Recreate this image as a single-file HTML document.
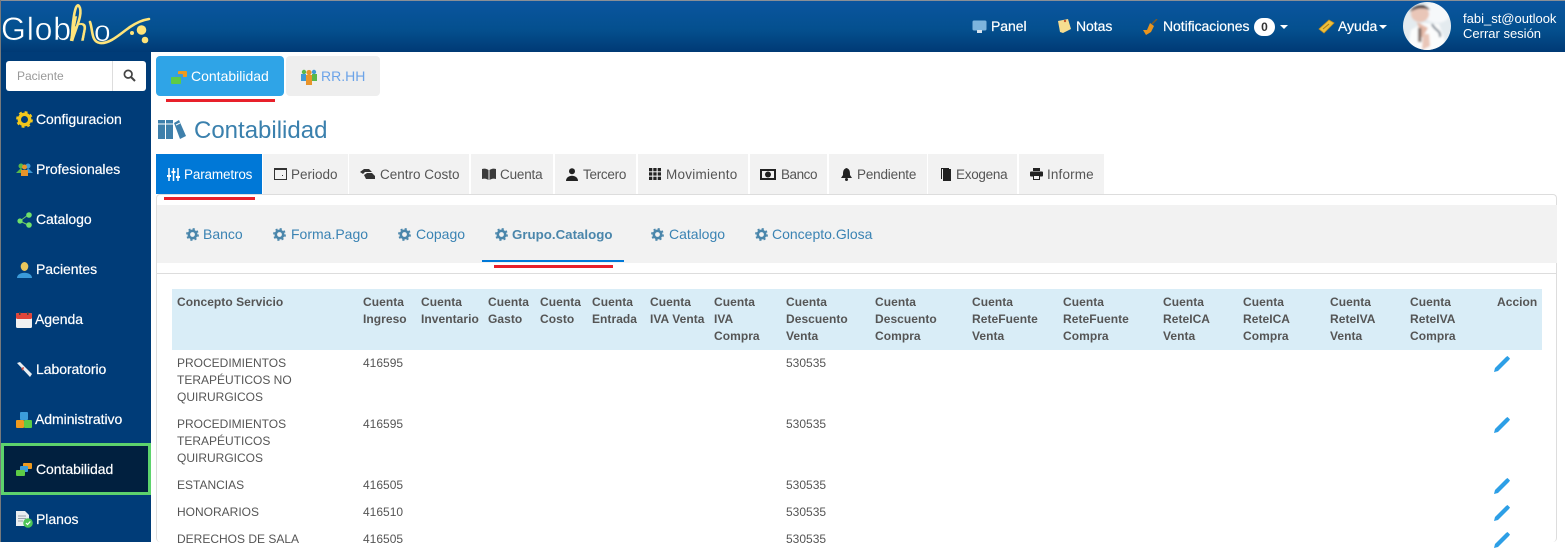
<!DOCTYPE html>
<html lang="es">
<head>
<meta charset="utf-8">
<title>Contabilidad</title>
<style>
html,body{margin:0;padding:0;background:#fff}
body{width:1565px;height:542px;overflow:hidden;position:relative;font-family:"Liberation Sans",sans-serif}
div,span,svg{position:absolute}
.t{white-space:nowrap}
#hdr{left:0;top:1px;width:1565px;height:51px;background:linear-gradient(#0a559f 0%,#04508f 55%,#003a75 100%)}
#top{left:0;top:0;width:1565px;height:1px;background:#8a8f96}
#side{left:0;top:52px;width:151px;height:490px;background:#003c78}
#edge{left:0;top:0;width:1px;height:542px;background:#77797c}
.n{color:#fff;font-size:14px;line-height:18px;left:36px;letter-spacing:-.05px;-webkit-text-stroke:.2px #fff}
.h{color:#fff;font-size:14px;line-height:18px;letter-spacing:-.05px;-webkit-text-stroke:.2px #fff}
.tab{top:154px;height:40px;background:#f2f2f2}
.tl{top:167px;font-size:13.5px;line-height:16px;color:#555}
.sl{top:226px;font-size:14px;line-height:16px;color:#3a83b3}
.th{font-size:12px;font-weight:bold;color:#555;line-height:17px;top:294px;letter-spacing:.05px}
.td{font-size:12px;color:#555;line-height:17px}
</style>
</head>
<body>
<div id="top"></div>
<div id="hdr"></div>
<div id="side"></div>
<div id="edge"></div>

<!-- logo -->
<svg style="left:0;top:0" width="160" height="52" viewBox="0 0 160 52">
<text x="1" y="40" font-family="Liberation Sans" font-size="32" fill="#fff" stroke="#04508f" stroke-width=".5" textLength="70">Glob</text>
<text x="69" y="41" font-family="Liberation Sans" font-style="italic" font-size="34" fill="#ffe47a" stroke="#04508f" stroke-width=".4">h</text>
<text x="94" y="41" font-family="Liberation Sans" font-size="30" fill="#fff" stroke="#04508f" stroke-width=".5">o</text>
<path d="M72 41C75 30 84 13 79 6C75 1 72 25 72 41" fill="none" stroke="#ffe47a" stroke-width="2.6"/>
<path d="M90 22C93 30 91 42 100 43C110 44 120 34 130 27C136 23 142 20 149 19" fill="none" stroke="#ffe47a" stroke-width="2.6" stroke-linecap="round"/>
<circle cx="141.500" cy="30" r="4.800" fill="#ffe47a"/><circle cx="132" cy="33" r="2" fill="#ffe47a"/><circle cx="145" cy="40" r="3.300" fill="#ffe47a"/>
</svg>

<!-- header nav -->
<svg style="left:972px;top:20px" width="15" height="14" viewBox="0 0 15 14"><rect x=".5" y=".5" width="14" height="10" rx="1.5" fill="#7db4dd"/><rect x="5" y="10" width="5" height="3" fill="#d8e4ee"/></svg>
<span class="h t" style="left:991px;top:17px">Panel</span>
<svg style="left:1057px;top:19px" width="14" height="15" viewBox="0 0 14 15"><path d="M1 2L11 0L14 10L6 14L3 13Z" fill="#f6dd90"/><circle cx="8" cy="2" r="1.2" fill="#c4572e"/></svg>
<span class="h t" style="left:1076px;top:17px">Notas</span>
<svg style="left:1143px;top:19px" width="15" height="17" viewBox="0 0 15 17"><path d="M7 4L11 7L8 13L3 16L0 11L4 11Z" fill="#e8941f"/><path d="M9 5L14 0" stroke="#7a5a2a" stroke-width="1.5"/></svg>
<span class="h t" style="left:1163px;top:17px">Notificaciones</span>
<div style="left:1254px;top:18px;width:21px;height:18px;border-radius:9px;background:#fff;color:#333;font-size:12px;font-weight:bold;line-height:18px;text-align:center">0</div>
<div style="left:1280px;top:25px;width:0;height:0;border:4px solid transparent;border-top-color:#fff;border-bottom:0"></div>
<svg style="left:1318px;top:19px" width="17" height="15" viewBox="0 0 17 15"><path d="M1 10L11 1L16 4L6 14Z" fill="#edc03c" stroke="#c78f1e" stroke-width=".8"/><path d="M5 10L11 5" stroke="#a87a1a"/></svg>
<span class="h t" style="left:1338px;top:17px">Ayuda</span>
<div style="left:1379px;top:25px;width:0;height:0;border:4px solid transparent;border-top-color:#fff;border-bottom:0"></div>

<!-- avatar -->
<svg style="left:1403px;top:2px" width="48" height="48" viewBox="0 0 48 48">
<defs><clipPath id="c"><ellipse cx="24" cy="24" rx="24" ry="24"/></clipPath><filter id="b"><feGaussianBlur stdDeviation="1.100"/></filter></defs>
<g clip-path="url(#c)"><rect width="48" height="48" fill="#e4ebef"/>
<g filter="url(#b)">
<ellipse cx="34" cy="10" rx="14" ry="11" fill="#f6f8fa"/>
<path d="M4 50L8 28L20 21L36 22L46 50Z" fill="#fbfcfc"/>
<ellipse cx="17" cy="12" rx="9" ry="8" fill="#e9c6b8"/>
<path d="M7 10C10 2 24 1 27 8C20 5 13 6 7 10Z" fill="#3e3230"/>
<path d="M14 20L19 36L25 26Z" fill="#e4b8a6"/>
<path d="M29 22C32 29 38 28 37 35" fill="none" stroke="#6f7c8a" stroke-width="2"/>
<rect x="15" y="26" width="3.500" height="14" fill="#85736c"/>
<path d="M20 32L26 32L27 44L19 48Z" fill="#e9c6b8"/></g></g>
</svg>
<span class="t" style="left:1463px;top:11px;color:#fff;font-size:13px;line-height:15px">fabi_st@outlook</span>
<span class="t" style="left:1463px;top:26px;color:#fff;font-size:13px;line-height:15px">Cerrar sesión</span>

<!-- search -->
<div style="left:6px;top:61px;width:140px;height:30px;background:#fff;border-radius:3px"></div>
<div style="left:112px;top:61px;width:1px;height:30px;background:#ddd"></div>
<span class="t" style="left:17px;top:69px;font-size:12px;line-height:15px;color:#999">Paciente</span>
<svg style="left:123px;top:69px" width="13" height="13" viewBox="0 0 13 13"><circle cx="5.2" cy="5.2" r="3.8" fill="none" stroke="#444" stroke-width="1.7"/><path d="M8 8L12 12" stroke="#444" stroke-width="2"/></svg>

<!-- sidebar items -->
<div style="left:1px;top:443px;width:144px;height:46px;border:3px solid #5dd26c;background:#01203f"></div>
<svg style="left:16px;top:111px" width="17" height="17" viewBox="0 0 17 17"><circle cx="8.5" cy="8.5" r="5.2" fill="none" stroke="#f2c71c" stroke-width="3.4"/><circle cx="8.5" cy="8.5" r="7.4" fill="none" stroke="#f2c71c" stroke-width="2" stroke-dasharray="2.9 2.9"/></svg>
<span class="n t" style="top:110px">Configuracion</span>
<svg style="left:16px;top:163px" width="17" height="14" viewBox="0 0 17 14"><circle cx="5" cy="3" r="2.5" fill="#59b84a"/><circle cx="12" cy="3" r="2.5" fill="#3e9ad6"/><path d="M0 10L5 5L8 10Z" fill="#59b84a"/><path d="M9 10L12 5L17 10Z" fill="#3e9ad6"/><circle cx="8.5" cy="4" r="2.5" fill="#e8942a"/><rect x="5" y="7" width="7" height="6" fill="#e8942a"/></svg>
<span class="n t" style="top:160px">Profesionales</span>
<svg style="left:17px;top:212px" width="15" height="16" viewBox="0 0 15 16"><path d="M3 9L11 3M3 9L11 13" stroke="#6ecb63" stroke-width="1"/><circle cx="3" cy="9" r="2.6" fill="#6ee06a"/><circle cx="12" cy="3" r="2.8" fill="#6ee06a"/><circle cx="12" cy="13" r="2.8" fill="#6ee06a"/></svg>
<span class="n t" style="top:210px">Catalogo</span>
<svg style="left:17px;top:262px" width="15" height="16" viewBox="0 0 15 16"><ellipse cx="7.5" cy="4.5" rx="3.8" ry="4.5" fill="#e8c65c"/><path d="M0 16C0 9 15 9 15 16Z" fill="#3a9ad9"/></svg>
<span class="n t" style="top:260px">Pacientes</span>
<svg style="left:16px;top:312px" width="16" height="16" viewBox="0 0 16 16"><rect y="1" width="16" height="15" rx="1.5" fill="#f1f1f1"/><rect y="1" width="16" height="6" rx="1.5" fill="#e0453a"/><rect x="3" y="0" width="1.5" height="3" fill="#444"/><rect x="11" y="0" width="1.5" height="3" fill="#444"/></svg>
<span class="n t" style="left:35px;top:310px">Agenda</span>
<svg style="left:16px;top:362px" width="16" height="16" viewBox="0 0 16 16"><path d="M1 1L4 0L16 12L14 15Z" fill="#e8edf1"/><path d="M5 6L8 5L7 9Z" fill="#d24a3c"/></svg>
<span class="n t" style="top:360px">Laboratorio</span>
<svg style="left:16px;top:412px" width="16" height="16" viewBox="0 0 16 16"><rect x="4" y="0" width="8" height="8" rx="1" fill="#3b9ddc"/><rect x="0" y="8" width="8" height="8" rx="1" fill="#ef9a1e"/><rect x="8" y="8" width="8" height="8" rx="1" fill="#5ecb45"/></svg>
<span class="n t" style="left:35px;top:410px">Administrativo</span>
<svg style="left:16px;top:463px" width="16" height="13" viewBox="0 0 16 13"><rect x="7" y="0" width="9" height="6" rx="1" fill="#ef9a1e"/><rect x="4" y="3" width="8" height="6" rx="1" fill="#3b9ddc"/><rect x="0" y="7" width="9" height="6" rx="1" fill="#5ecb45"/></svg>
<span class="n t" style="top:460px">Contabilidad</span>
<svg style="left:16px;top:511px" width="17" height="17" viewBox="0 0 17 17"><path d="M0 0H9L13 4V15H0Z" fill="#e9edf0"/><path d="M2 5H10M2 7.5H10M2 10H7" stroke="#9aa5ad"/><circle cx="12" cy="12" r="4.8" fill="#4cc557"/><path d="M10 12L11.5 13.5L14.3 10.5" fill="none" stroke="#fff" stroke-width="1.2"/></svg>
<span class="n t" style="top:510px">Planos</span>

<!-- module tabs -->
<div style="left:156px;top:56px;width:128px;height:40px;background:#2fa4e7;border-radius:4px"></div>
<svg style="left:171px;top:71px" width="16" height="13" viewBox="0 0 16 13"><rect x="7" y="0" width="9" height="6" rx="1" fill="#ef9a1e"/><rect x="4" y="3" width="8" height="6" rx="1" fill="#3b9ddc"/><rect x="0" y="6" width="10" height="7" rx="1" fill="#5ecb45"/></svg>
<span class="t" style="left:191px;top:68px;font-size:14px;line-height:17px;color:#fff">Contabilidad</span>
<div style="left:286px;top:56px;width:94px;height:40px;background:#eee;border-radius:4px"></div>
<svg style="left:301px;top:69px" width="16" height="16" viewBox="0 0 16 16"><circle cx="3" cy="3" r="2.2" fill="#59b84a"/><circle cx="13" cy="3" r="2.2" fill="#3e9ad6"/><rect x="0" y="5" width="5" height="7" fill="#3e9ad6"/><rect x="11" y="5" width="5" height="7" fill="#59b84a"/><circle cx="8" cy="3.5" r="2.6" fill="#e8942a"/><rect x="5" y="6" width="6" height="10" fill="#e8942a"/></svg>
<span class="t" style="left:321px;top:68px;font-size:14px;line-height:17px;color:#6ba3e8">RR.HH</span>
<div style="left:166px;top:99px;width:109px;height:3px;background:#e8202a"></div>

<!-- heading -->
<svg style="left:158px;top:119px" width="28" height="21" viewBox="0 0 28 21"><rect x="0" y="1" width="7" height="19" fill="#3f80ab"/><rect x="8" y="1" width="7" height="19" fill="#3f80ab"/><path d="M16 4L21 1L28 17L22 20Z" fill="#3f80ab"/><path d="M0 5H15" stroke="#fff"/><path d="M18 6L22 4" stroke="#fff"/></svg>
<span class="t" style="left:194px;top:116px;font-size:24px;line-height:30px;color:#3a80ad">Contabilidad</span>

<!-- main tabs -->
<div style="left:156px;top:194px;width:1401px;height:348px;border:1px solid #ddd;border-radius:4px;box-sizing:border-box;border-bottom:0"></div>
<div class="tab" style="left:156px;width:106px;background:#0078d7"></div>
<div class="tab" style="left:263px;width:85px"></div>
<div class="tab" style="left:349px;width:120px"></div>
<div class="tab" style="left:471px;width:82px"></div>
<div class="tab" style="left:555px;width:81px"></div>
<div class="tab" style="left:638px;width:110px"></div>
<div class="tab" style="left:750px;width:77px"></div>
<div class="tab" style="left:829px;width:98px"></div>
<div class="tab" style="left:928px;width:89px"></div>
<div class="tab" style="left:1019px;width:85px"></div>

<svg style="left:167px;top:168px" width="13" height="13" viewBox="0 0 13 13"><path d="M2 0V13M6.500 0V13M11 0V13" stroke="#fff" stroke-width="1.500"/><path d="M0 8H4M4.500 4H8.500M9 9H13" stroke="#fff" stroke-width="2"/></svg>
<span class="tl t" style="left:184px;color:#fff;letter-spacing:-.15px">Parametros</span>
<svg style="left:274px;top:168px" width="13" height="12" viewBox="0 0 13 12"><rect x=".5" y=".5" width="12" height="11" fill="none" stroke="#333"/><rect x="0" y="0" width="13" height="2" fill="#333"/><rect x="8" y="7" width="1" height="1" fill="#333"/></svg>
<span class="tl t" style="left:291px;letter-spacing:0">Periodo</span>
<svg style="left:360px;top:169px" width="15" height="10" viewBox="0 0 15 10"><path d="M0 3L4 0H9L12 3H5L3 5Z" fill="#333"/><path d="M4 6L7 4H12L15 7V10H6Z" fill="#333"/></svg>
<span class="tl t" style="left:380px;letter-spacing:0">Centro Costo</span>
<svg style="left:482px;top:168px" width="14" height="12" viewBox="0 0 14 12"><path d="M0 1C3 0 5 1 6.500 2V12C5 11 3 10 0 11Z" fill="#3a3a3a"/><path d="M14 1C11 0 9 1 7.500 2V12C9 11 11 10 14 11Z" fill="#3a3a3a"/></svg>
<span class="tl t" style="left:500px;letter-spacing:-.18px">Cuenta</span>
<svg style="left:566px;top:168px" width="12" height="13" viewBox="0 0 12 13"><circle cx="6" cy="3.200" r="3" fill="#222"/><path d="M0 13C0 6 12 6 12 13Z" fill="#222"/></svg>
<span class="tl t" style="left:583px;letter-spacing:-.28px">Tercero</span>
<svg style="left:649px;top:168px" width="12" height="12" viewBox="0 0 12 12" fill="#222"><rect width="3.300" height="3.300"/><rect x="4.300" width="3.300" height="3.300"/><rect x="8.700" width="3.300" height="3.300"/><rect y="4.300" width="3.300" height="3.300"/><rect x="4.300" y="4.300" width="3.300" height="3.300"/><rect x="8.700" y="4.300" width="3.300" height="3.300"/><rect y="8.700" width="3.300" height="3.300"/><rect x="4.300" y="8.700" width="3.300" height="3.300"/><rect x="8.700" y="8.700" width="3.300" height="3.300"/></svg>
<span class="tl t" style="left:666px;letter-spacing:.25px">Movimiento</span>
<svg style="left:760px;top:169px" width="16" height="11" viewBox="0 0 16 11"><rect x="1" y="1" width="14" height="9" fill="none" stroke="#222" stroke-width="2"/><ellipse cx="8" cy="5.500" rx="3" ry="3" fill="#222"/></svg>
<span class="tl t" style="left:781px;letter-spacing:-.45px">Banco</span>
<svg style="left:841px;top:168px" width="11" height="13" viewBox="0 0 11 13"><path d="M5.500 0C9 1 9 4 9 7L11 10H0L2 7C2 4 2 1 5.500 0Z" fill="#222"/><circle cx="5.500" cy="11.500" r="1.500" fill="#222"/></svg>
<span class="tl t" style="left:857px;letter-spacing:-.18px">Pendiente</span>
<svg style="left:941px;top:168px" width="10" height="13" viewBox="0 0 10 13"><rect x="2" y="1" width="8" height="12" fill="#222"/><path d="M.5 11V.5H8" fill="none" stroke="#222"/></svg>
<span class="tl t" style="left:956px;letter-spacing:-.28px">Exogena</span>
<svg style="left:1030px;top:168px" width="13" height="12" viewBox="0 0 13 12"><rect x="3" y="0" width="7" height="3" fill="#222"/><rect x="0" y="3.500" width="13" height="5" rx="1" fill="#222"/><rect x="3" y="7" width="7" height="5" fill="#222"/><rect x="4" y="8" width="5" height="3" fill="#f2f2f2"/></svg>
<span class="tl t" style="left:1047px;letter-spacing:.15px">Informe</span>
<div style="left:164px;top:197px;width:91px;height:3px;background:#e8202a"></div>

<!-- sub nav -->
<div style="left:157px;top:205px;width:1400px;height:58px;background:#f2f2f2"></div>
<div style="left:157px;top:273px;width:1400px;height:1px;background:#ddd"></div>
<div style="left:482px;top:260px;width:142px;height:2px;background:#0078d7"></div>
<div style="left:494px;top:265px;width:119px;height:3px;background:#e8202a"></div>

<svg width="0" height="0" style="left:0;top:0"><defs><g id="g"><circle cx="6.500" cy="6.500" r="3.700" fill="none" stroke="#4a86ab" stroke-width="2.600"/><circle cx="6.500" cy="6.500" r="5.600" fill="none" stroke="#4a86ab" stroke-width="1.600" stroke-dasharray="2.200 2.200"/></g>
<path id="p" d="M0 16L1 12L12 1L13.500 0L16 2.500L15 4L4 15Z"/></defs></svg>
<svg style="left:186px;top:228px" width="13" height="13"><use href="#g"/></svg>
<span class="sl t" style="left:203px">Banco</span>
<svg style="left:273px;top:228px" width="13" height="13"><use href="#g"/></svg>
<span class="sl t" style="left:291px">Forma.Pago</span>
<svg style="left:398px;top:228px" width="13" height="13"><use href="#g"/></svg>
<span class="sl t" style="left:416px">Copago</span>
<svg style="left:495px;top:228px" width="13" height="13"><use href="#g"/></svg>
<span class="sl t" style="left:512px;top:227px;font-weight:bold;font-size:13.300px;color:#4a86ab">Grupo.Catalogo</span>
<svg style="left:651px;top:228px" width="13" height="13"><use href="#g"/></svg>
<span class="sl t" style="left:669px">Catalogo</span>
<svg style="left:755px;top:228px" width="13" height="13"><use href="#g"/></svg>
<span class="sl t" style="left:772px">Concepto.Glosa</span>

<!-- table header -->
<div style="left:172px;top:289px;width:1370px;height:61px;background:#d9edf7"></div>
<span class="th t" style="left:177px">Concepto Servicio</span>
<span class="th t" style="left:363px">Cuenta<br>Ingreso</span>
<span class="th t" style="left:421px">Cuenta<br>Inventario</span>
<span class="th t" style="left:488px">Cuenta<br>Gasto</span>
<span class="th t" style="left:540px">Cuenta<br>Costo</span>
<span class="th t" style="left:592px">Cuenta<br>Entrada</span>
<span class="th t" style="left:650px">Cuenta<br>IVA Venta</span>
<span class="th t" style="left:714px">Cuenta<br>IVA<br>Compra</span>
<span class="th t" style="left:786px">Cuenta<br>Descuento<br>Venta</span>
<span class="th t" style="left:875px">Cuenta<br>Descuento<br>Compra</span>
<span class="th t" style="left:972px">Cuenta<br>ReteFuente<br>Venta</span>
<span class="th t" style="left:1063px">Cuenta<br>ReteFuente<br>Compra</span>
<span class="th t" style="left:1163px">Cuenta<br>ReteICA<br>Venta</span>
<span class="th t" style="left:1243px">Cuenta<br>ReteICA<br>Compra</span>
<span class="th t" style="left:1330px">Cuenta<br>ReteIVA<br>Venta</span>
<span class="th t" style="left:1410px">Cuenta<br>ReteIVA<br>Compra</span>
<span class="th t" style="left:1497px">Accion</span>

<!-- table rows -->
<span class="td t" style="left:177px;top:355px">PROCEDIMIENTOS<br>TERAPÉUTICOS NO<br>QUIRURGICOS</span>
<span class="td t" style="left:363px;top:355px">416595</span>
<span class="td t" style="left:786px;top:355px">530535</span>
<svg style="left:1494px;top:356px" width="16" height="16" fill="#2d9fe6"><use href="#p"/></svg>

<span class="td t" style="left:177px;top:416px">PROCEDIMIENTOS<br>TERAPÉUTICOS<br>QUIRURGICOS</span>
<span class="td t" style="left:363px;top:416px">416595</span>
<span class="td t" style="left:786px;top:416px">530535</span>
<svg style="left:1494px;top:417px" width="16" height="16" fill="#2d9fe6"><use href="#p"/></svg>

<span class="td t" style="left:177px;top:477px">ESTANCIAS</span>
<span class="td t" style="left:363px;top:477px">416505</span>
<span class="td t" style="left:786px;top:477px">530535</span>
<svg style="left:1494px;top:478px" width="16" height="16" fill="#2d9fe6"><use href="#p"/></svg>

<span class="td t" style="left:177px;top:504px">HONORARIOS</span>
<span class="td t" style="left:363px;top:504px">416510</span>
<span class="td t" style="left:786px;top:504px">530535</span>
<svg style="left:1494px;top:505px" width="16" height="16" fill="#2d9fe6"><use href="#p"/></svg>

<span class="td t" style="left:177px;top:531px">DERECHOS DE SALA</span>
<span class="td t" style="left:363px;top:531px">416505</span>
<span class="td t" style="left:786px;top:531px">530535</span>
<svg style="left:1494px;top:532px" width="16" height="16" fill="#2d9fe6"><use href="#p"/></svg>
</body>
</html>
